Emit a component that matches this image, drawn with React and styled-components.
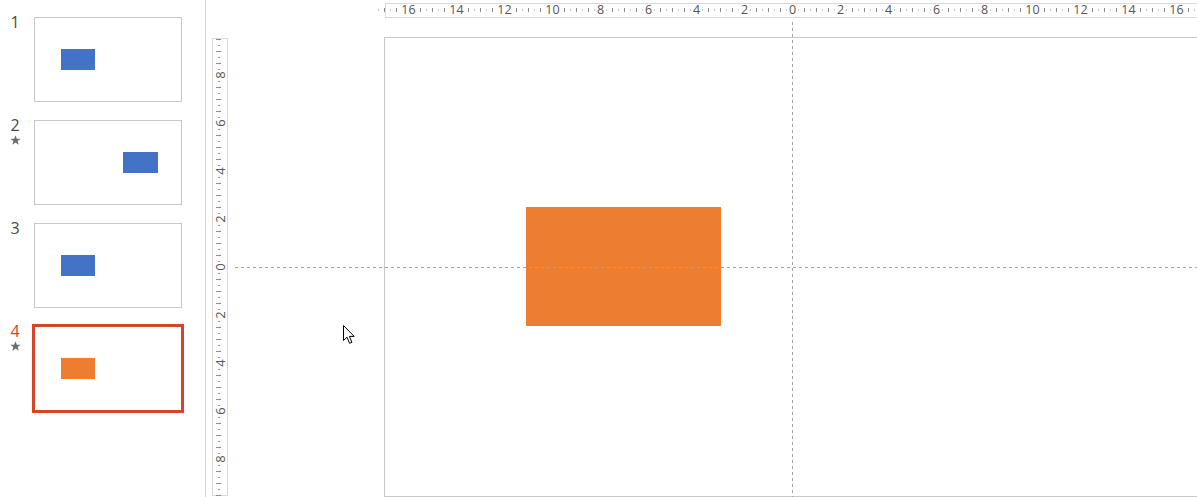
import React from 'react';
import styled, { createGlobalStyle } from 'styled-components';

const Global = createGlobalStyle`
  html, body { margin: 0; padding: 0; background: #fff; overflow: hidden; }
  body { font-family: "Open Sans", "Noto Sans", sans-serif; }
`;

const Shell = styled.div`
  display: flex;
  width: 1197px;
  height: 497px;
  overflow: hidden;
  background: #fff;
`;

const Sidebar = styled.aside`
  flex: 0 0 205px;
  border-right: 1px solid #d6d6d6;
  display: flex;
  flex-direction: column;
  gap: 18px;
  padding-top: 17px;
`;

const ThumbRow = styled.div`
  display: flex;
  gap: 4px;
  align-items: flex-start;
`;

const Marker = styled.div`
  width: 30px;
  display: flex;
  flex-direction: column;
  align-items: center;
`;

const Num = styled.span`
  margin-top: -3px;
  font-size: 16px;
  line-height: 16px;
  color: ${p => (p.$active ? '#d24726' : '#4a4a4a')};
`;

const StarMark = styled.svg`
  margin-top: 2px;
  width: 11px;
  height: 10px;
`;

const Thumb = styled.div`
  position: relative;
  width: 148px;
  height: 85px;
  box-sizing: border-box;
  border: 1px solid ${p => (p.$active ? '#d24726' : '#c8c8c8')};
  box-shadow: ${p => (p.$active ? '0 0 0 2px #d24726' : 'none')};
  background: #fff;
`;

const MiniShape = styled.div`
  position: absolute;
  top: 31px;
  height: 21px;
  background: ${p => p.$color};
`;

const Editor = styled.main`
  position: relative;
  flex: 1;
  display: grid;
  grid-template-columns: 6px 16px 156px 1fr;
  grid-template-rows: 3px 15px 19px 1fr;
  overflow: hidden;
`;

const HRuler = styled.div`
  grid-column: 4;
  grid-row: 2;
  margin-left: 1px;
  width: 830px;
  height: 15px;
  box-sizing: border-box;
  border: 1px solid #d9d9d9;
  background: #fff;
  svg { display: block; overflow: visible; }
`;

const VRuler = styled.div`
  grid-column: 2;
  grid-row: 4;
  margin: 1px 0 1px 0;
  box-sizing: border-box;
  border: 1px solid #d9d9d9;
  background: #fff;
  svg { display: block; overflow: visible; }
`;

const Slide = styled.section`
  grid-column: 4;
  grid-row: 4;
  position: relative;
  width: 816px;
  height: 460px;
  box-sizing: border-box;
  border: 1px solid #c8c8c8;
  background: #fff;
`;

const Shape = styled.div`
  position: absolute;
  left: 141px;
  top: 169px;
  width: 195px;
  height: 119px;
  background: #ed7d31;
`;

const VGuide = styled.div`
  position: absolute;
  left: 586px;
  top: 22px;
  bottom: 0;
  width: 1px;
  background: repeating-linear-gradient(to bottom, #a3a3a3 0 3px, transparent 3px 6px);
  z-index: 2;
`;

const HGuide = styled.div`
  position: absolute;
  left: 29px;
  right: 0;
  top: 267px;
  height: 1px;
  background: repeating-linear-gradient(to right, #a3a3a3 0 3px, transparent 3px 6px);
  z-index: 2;
`;

const Pointer = styled.svg`
  position: absolute;
  left: 136px;
  top: 324px;
  width: 14px;
  height: 21px;
  z-index: 3;
`;

const slides = [
  { n: 1, color: '#4472c4', left: 26, w: 34 },
  { n: 2, color: '#4472c4', left: 88, w: 35, star: true },
  { n: 3, color: '#4472c4', left: 26, w: 34 },
  { n: 4, color: '#ed7d31', left: 26, w: 34, star: true, active: true },
];

const Star = () => (
  <StarMark viewBox="0 0 11 10">
    <path d="M5.5 0.2 L6.8 3.7 L10.7 3.8 L7.6 6.1 L8.7 9.8 L5.5 7.6 L2.3 9.8 L3.4 6.1 L0.3 3.8 L4.2 3.7 Z" fill="#6b6b6b" />
  </StarMark>
);

const fontStack = '"Open Sans", "Noto Sans", sans-serif';

function HScale() {
  const zero = 406;
  const items = [];
  for (let i = -70; i <= 70; i++) {
    const x = zero + i * 6;
    if (x < -10 || x > 840) continue;
    const m = Math.abs(i % 8);
    if (m === 0) {
      items.push(
        <text key={i} x={x + 0.5} y={9.5} fontSize="12.5" fill="#555" textAnchor="middle"
          fontFamily={fontStack}>{Math.abs(i / 4)}</text>
      );
    } else if ((m === 1 || m === 7) && Math.abs(i) > 36) {
      // hidden behind two-digit labels
    } else if (i % 2 === 0) {
      items.push(<rect key={i} x={x} y={4} width={1} height={4} fill="#8c8c8c" />);
    } else {
      items.push(<rect key={i} x={x} y={5.5} width={1} height={1} fill="#9a9a9a" />);
    }
  }
  return (
    <svg width="828" height="13" viewBox="0 0 828 13">{items}</svg>
  );
}

function VScale() {
  const zero = 228;
  const items = [];
  for (let i = -40; i <= 40; i++) {
    const y = zero + i * 6;
    if (y < -2 || y > 458) continue;
    if (i % 8 === 0) {
      items.push(
        <text key={i} x={7} y={y} fontSize="13" fill="#555" textAnchor="middle"
          dominantBaseline="central" transform={`rotate(-90 7 ${y})`}
          fontFamily={fontStack}>{Math.abs(i / 4)}</text>
      );
    } else if (i % 2 === 0) {
      items.push(<rect key={i} x={3} y={y} width={5} height={1} fill="#8c8c8c" />);
    } else {
      items.push(<rect key={i} x={5} y={y} width={2} height={1} fill="#9a9a9a" />);
    }
  }
  return (
    <svg width="14" height="456" viewBox="0 0 14 456">{items}</svg>
  );
}

export default function App() {
  return (
    <>
      <Global />
      <Shell>
        <Sidebar>
          {slides.map(s => (
            <ThumbRow key={s.n}>
              <Marker>
                <Num $active={s.active}>{s.n}</Num>
                {s.star && <Star />}
              </Marker>
              <Thumb $active={s.active}>
                <MiniShape $color={s.color} style={{ left: s.left, width: s.w }} />
              </Thumb>
            </ThumbRow>
          ))}
        </Sidebar>
        <Editor>
          <HRuler><HScale /></HRuler>
          <VRuler><VScale /></VRuler>
          <Slide>
            <Shape />
          </Slide>
          <VGuide />
          <HGuide />
          <Pointer viewBox="0 0 14 21">
            <path d="M1.5 1.5 L1.5 16.5 L5 13.2 L7.6 19.3 L9.9 18.3 L7.4 12.4 L12.2 12.4 Z"
              fill="#fff" stroke="#000" strokeWidth="1" strokeLinejoin="miter" />
          </Pointer>
        </Editor>
      </Shell>
    </>
  );
}
